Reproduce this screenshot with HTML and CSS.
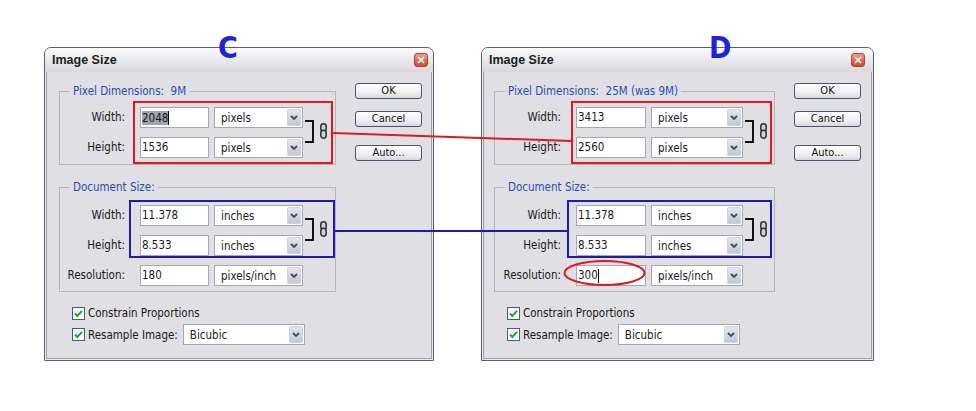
FILE: index.html
```html
<!DOCTYPE html>
<html>
<head>
    <link rel="stylesheet" href="styles.css">
</head>
<body>
    <div class="page">
        <!-- Dialog C: before resampling -->
        <div class="dialog">
            <div class="titlebar">
                <span class="title">Image Size</span>
                <span class="close"><svg width="8" height="8" viewBox="0 0 8 8"><path d="M1 1L7 7M7 1L1 7" stroke="#fff" stroke-width="1.7"/></svg></span>
            </div>
            <div class="body">
                <div class="main">
                    <fieldset class="group">
                        <legend>Pixel Dimensions:&nbsp; 9M</legend>
                        <div class="grid">
                            <label class="lbl">Width:</label>
                            <div class="input"><span class="hilite">2048</span><span class="caret"></span></div>
                            <div class="select"><span class="val">pixels</span><span class="arrow"><svg width="8" height="5" viewBox="0 0 8 5"><path d="M1 1L4 4L7 1" fill="none" stroke="#454a5a" stroke-width="1.8"/></svg></span></div>
                            <div class="chain"><span class="bracket"></span><svg class="link" width="7" height="16" viewBox="0 0 7 16"><rect x="0.8" y="0.8" width="5.4" height="8" rx="2.7" fill="#cfcfd4" stroke="#333" stroke-width="1.5"/><rect x="0.8" y="7.2" width="5.4" height="8" rx="2.7" fill="#cfcfd4" stroke="#333" stroke-width="1.5"/></svg></div>
                            <label class="lbl">Height:</label>
                            <div class="input">1536</div>
                            <div class="select"><span class="val">pixels</span><span class="arrow"><svg width="8" height="5" viewBox="0 0 8 5"><path d="M1 1L4 4L7 1" fill="none" stroke="#454a5a" stroke-width="1.8"/></svg></span></div>
                        </div>
                    </fieldset>
                    <fieldset class="group group-doc">
                        <legend>Document Size:</legend>
                        <div class="grid">
                            <label class="lbl">Width:</label>
                            <div class="input">11.378</div>
                            <div class="select"><span class="val">inches</span><span class="arrow"><svg width="8" height="5" viewBox="0 0 8 5"><path d="M1 1L4 4L7 1" fill="none" stroke="#454a5a" stroke-width="1.8"/></svg></span></div>
                            <div class="chain"><span class="bracket"></span><svg class="link" width="7" height="16" viewBox="0 0 7 16"><rect x="0.8" y="0.8" width="5.4" height="8" rx="2.7" fill="#cfcfd4" stroke="#333" stroke-width="1.5"/><rect x="0.8" y="7.2" width="5.4" height="8" rx="2.7" fill="#cfcfd4" stroke="#333" stroke-width="1.5"/></svg></div>
                            <label class="lbl">Height:</label>
                            <div class="input">8.533</div>
                            <div class="select"><span class="val">inches</span><span class="arrow"><svg width="8" height="5" viewBox="0 0 8 5"><path d="M1 1L4 4L7 1" fill="none" stroke="#454a5a" stroke-width="1.8"/></svg></span></div>
                            <label class="lbl">Resolution:</label>
                            <div class="input">180</div>
                            <div class="select"><span class="val">pixels/inch</span><span class="arrow"><svg width="8" height="5" viewBox="0 0 8 5"><path d="M1 1L4 4L7 1" fill="none" stroke="#454a5a" stroke-width="1.8"/></svg></span></div>
                        </div>
                    </fieldset>
                    <div class="options">
                        <div class="opt">
                            <span class="check"><svg width="11" height="11" viewBox="0 0 11 11"><path d="M2 5.5L4.3 8L9 2.8" fill="none" stroke="#22a32a" stroke-width="2"/></svg></span>
                            <span>Constrain Proportions</span>
                        </div>
                        <div class="opt opt-tall">
                            <span class="check"><svg width="11" height="11" viewBox="0 0 11 11"><path d="M2 5.5L4.3 8L9 2.8" fill="none" stroke="#22a32a" stroke-width="2"/></svg></span>
                            <span>Resample Image:</span>
                            <div class="select select-method"><span class="val">Bicubic</span><span class="arrow"><svg width="8" height="5" viewBox="0 0 8 5"><path d="M1 1L4 4L7 1" fill="none" stroke="#454a5a" stroke-width="1.8"/></svg></span></div>
                        </div>
                    </div>
                </div>
                <div class="side">
                    <button class="btn">OK</button>
                    <button class="btn">Cancel</button>
                    <button class="btn btn-auto">Auto...</button>
                </div>
            </div>
        </div>

        <!-- Dialog D: after resampling -->
        <div class="dialog dlg-d">
            <div class="titlebar">
                <span class="title">Image Size</span>
                <span class="close"><svg width="8" height="8" viewBox="0 0 8 8"><path d="M1 1L7 7M7 1L1 7" stroke="#fff" stroke-width="1.7"/></svg></span>
            </div>
            <div class="body">
                <div class="main">
                    <fieldset class="group">
                        <legend>Pixel Dimensions:&nbsp; 25M (was 9M)</legend>
                        <div class="grid">
                            <label class="lbl">Width:</label>
                            <div class="input">3413</div>
                            <div class="select"><span class="val">pixels</span><span class="arrow"><svg width="8" height="5" viewBox="0 0 8 5"><path d="M1 1L4 4L7 1" fill="none" stroke="#454a5a" stroke-width="1.8"/></svg></span></div>
                            <div class="chain"><span class="bracket"></span><svg class="link" width="7" height="16" viewBox="0 0 7 16"><rect x="0.8" y="0.8" width="5.4" height="8" rx="2.7" fill="#cfcfd4" stroke="#333" stroke-width="1.5"/><rect x="0.8" y="7.2" width="5.4" height="8" rx="2.7" fill="#cfcfd4" stroke="#333" stroke-width="1.5"/></svg></div>
                            <label class="lbl">Height:</label>
                            <div class="input">2560</div>
                            <div class="select"><span class="val">pixels</span><span class="arrow"><svg width="8" height="5" viewBox="0 0 8 5"><path d="M1 1L4 4L7 1" fill="none" stroke="#454a5a" stroke-width="1.8"/></svg></span></div>
                        </div>
                    </fieldset>
                    <fieldset class="group group-doc">
                        <legend>Document Size:</legend>
                        <div class="grid">
                            <label class="lbl">Width:</label>
                            <div class="input">11.378</div>
                            <div class="select"><span class="val">inches</span><span class="arrow"><svg width="8" height="5" viewBox="0 0 8 5"><path d="M1 1L4 4L7 1" fill="none" stroke="#454a5a" stroke-width="1.8"/></svg></span></div>
                            <div class="chain"><span class="bracket"></span><svg class="link" width="7" height="16" viewBox="0 0 7 16"><rect x="0.8" y="0.8" width="5.4" height="8" rx="2.7" fill="#cfcfd4" stroke="#333" stroke-width="1.5"/><rect x="0.8" y="7.2" width="5.4" height="8" rx="2.7" fill="#cfcfd4" stroke="#333" stroke-width="1.5"/></svg></div>
                            <label class="lbl">Height:</label>
                            <div class="input">8.533</div>
                            <div class="select"><span class="val">inches</span><span class="arrow"><svg width="8" height="5" viewBox="0 0 8 5"><path d="M1 1L4 4L7 1" fill="none" stroke="#454a5a" stroke-width="1.8"/></svg></span></div>
                            <label class="lbl">Resolution:</label>
                            <div class="input"><span>300</span><span class="caret"></span></div>
                            <div class="select"><span class="val">pixels/inch</span><span class="arrow"><svg width="8" height="5" viewBox="0 0 8 5"><path d="M1 1L4 4L7 1" fill="none" stroke="#454a5a" stroke-width="1.8"/></svg></span></div>
                        </div>
                    </fieldset>
                    <div class="options">
                        <div class="opt">
                            <span class="check"><svg width="11" height="11" viewBox="0 0 11 11"><path d="M2 5.5L4.3 8L9 2.8" fill="none" stroke="#22a32a" stroke-width="2"/></svg></span>
                            <span>Constrain Proportions</span>
                        </div>
                        <div class="opt opt-tall">
                            <span class="check"><svg width="11" height="11" viewBox="0 0 11 11"><path d="M2 5.5L4.3 8L9 2.8" fill="none" stroke="#22a32a" stroke-width="2"/></svg></span>
                            <span>Resample Image:</span>
                            <div class="select select-method"><span class="val">Bicubic</span><span class="arrow"><svg width="8" height="5" viewBox="0 0 8 5"><path d="M1 1L4 4L7 1" fill="none" stroke="#454a5a" stroke-width="1.8"/></svg></span></div>
                        </div>
                    </div>
                </div>
                <div class="side">
                    <button class="btn">OK</button>
                    <button class="btn">Cancel</button>
                    <button class="btn btn-auto">Auto...</button>
                </div>
            </div>
        </div>

        <!-- Hand-drawn annotations on top -->
        <svg class="marks" width="976" height="411" viewBox="0 0 976 411">
            <rect x="134" y="102" width="198" height="61" fill="none" stroke="#e01820" stroke-width="2"/>
            <rect x="572" y="102" width="199" height="61" fill="none" stroke="#e01820" stroke-width="2"/>
            <line x1="333" y1="133" x2="572" y2="141" stroke="#e01820" stroke-width="2"/>
            <rect x="130" y="201" width="204" height="56" fill="none" stroke="#1c1cb4" stroke-width="2"/>
            <rect x="568" y="201" width="203" height="56" fill="none" stroke="#1c1cb4" stroke-width="2"/>
            <line x1="335" y1="231" x2="568" y2="231" stroke="#1c1cb4" stroke-width="2"/>
            <ellipse cx="604.5" cy="273" rx="40" ry="12" fill="none" stroke="#e01820" stroke-width="2"/>
        </svg>
        <span class="letter letter-c">C</span>
        <span class="letter letter-d">D</span>
    </div>
</body>
</html>
```

FILE: styles.css
```css
body {
    margin: 0;
    background: #fff;
    font-family: "DejaVu Sans Condensed", "Liberation Sans", sans-serif;
    font-size: 11.5px;
    color: #1a1a1a;
}

.page {
    position: relative;
    width: 976px;
    height: 411px;
    box-sizing: border-box;
    padding: 47px 0 0 44px;
    display: flex;
    align-items: flex-start;
    gap: 47px;
}

.dialog {
    width: 390px;
    box-sizing: border-box;
    border: 1px solid #5a5e70;
    border-radius: 7px 7px 0 0;
    background: #ebebee;
}

.dlg-d {
    width: 393px;
}

.titlebar {
    height: 24px;
    display: flex;
    align-items: center;
    justify-content: space-between;
    padding: 0 5px 0 7px;
    border-radius: 6px 6px 0 0;
    background: linear-gradient(#fbfbfc, #e8e8ec 55%, #d8d8de);
}

.dlg-d .titlebar {
    padding-right: 8px;
}

.title {
    font-family: "Liberation Sans", sans-serif;
    font-weight: bold;
    font-size: 12.5px;
    line-height: 24px;
    color: #1e1e1e;
}

.close {
    width: 14px;
    height: 14px;
    box-sizing: border-box;
    border: 1px solid #b5452e;
    border-radius: 3px;
    background: linear-gradient(#f29a84, #d4492f);
    display: flex;
    align-items: center;
    justify-content: center;
}

.body {
    display: flex;
    margin: 0 1px 1px;
    border: 1px solid #9d9fa9;
    border-top: 0;
    background: #e0dfe3;
    padding: 12px 9px 13px 12px;
}

.dlg-d .body {
    padding-left: 10px;
    padding-right: 10px;
}

.main {
    width: 277px;
}

.dlg-d .main {
    width: 281px;
}

.group {
    margin: 0;
    padding: 9px 0 6px;
    min-width: 0;
    border: 1px solid #b4b5bd;
}

.group legend {
    padding: 0 3px;
    margin-left: 10px;
    line-height: 14px;
    color: #1f4fb4;
}

.group-doc {
    margin-top: 15px;
    padding: 11px 0 5px;
}

.grid {
    display: grid;
    grid-template-columns: 75px 69px 89px auto;
    column-gap: 5px;
    row-gap: 9px;
}

.dlg-d .grid {
    grid-template-columns: 76px 70px 92px auto;
}

.lbl {
    height: 21px;
    line-height: 21px;
    text-align: right;
    padding-right: 10px;
}

.input {
    height: 21px;
    box-sizing: border-box;
    border: 1px solid #a3a8b4;
    background: #fff;
    padding-left: 1px;
    line-height: 19px;
    display: flex;
    align-items: center;
}

.hilite {
    background: #9ea2b2;
    line-height: 14px;
}

.caret {
    width: 1px;
    height: 14px;
    background: #111;
}

.select {
    height: 21px;
    box-sizing: border-box;
    border: 1px solid #a3a8b4;
    background: #fff;
    display: flex;
}

.val {
    flex: 1;
    padding-left: 6px;
    line-height: 20px;
}

.arrow {
    width: 14px;
    margin: 1px;
    border-radius: 2px;
    background: linear-gradient(#e6e9f3, #c0c5d6);
    box-shadow: inset 0 0 0 1px #d0d4e2;
    display: flex;
    align-items: center;
    justify-content: center;
}

.chain {
    grid-column: 4;
    grid-row: 1 / span 2;
    display: flex;
    align-items: center;
    margin-left: -3px;
}

.bracket {
    width: 9px;
    height: 23px;
    box-sizing: border-box;
    border: 2px solid #111;
    border-left: 0;
    margin-top: -3px;
}

.link {
    margin-left: 6px;
    margin-top: -3px;
}

.options {
    margin-top: 13px;
    padding-left: 13px;
    display: flex;
    flex-direction: column;
    gap: 3px;
}

.opt {
    height: 16px;
    display: flex;
    align-items: center;
}

.opt-tall {
    height: 21px;
}

.check {
    width: 13px;
    height: 13px;
    box-sizing: border-box;
    margin-right: 3px;
    border: 1px solid #4a5a7c;
    background: linear-gradient(#f4f4f6, #fff);
    display: flex;
    align-items: center;
    justify-content: center;
}

.select-method {
    width: 122px;
    margin-left: 5px;
}

.side {
    margin-left: 19px;
    margin-top: -1px;
    display: flex;
    flex-direction: column;
}

.btn {
    width: 67px;
    height: 16px;
    box-sizing: border-box;
    padding: 0;
    border: 1px solid #4a5370;
    border-radius: 3px;
    background: linear-gradient(#ffffff, #ededf1 65%, #d6d6dd);
    font-family: inherit;
    font-size: 11px;
    line-height: 14px;
    color: #111;
}

.btn + .btn {
    margin-top: 12px;
}

.btn-auto {
    margin-top: 18px !important;
}

.marks {
    position: absolute;
    top: 0;
    left: 0;
    pointer-events: none;
}

.letter {
    position: absolute;
    top: 33px;
    font-family: "DejaVu Sans Condensed", sans-serif;
    font-weight: bold;
    font-size: 30px;
    line-height: 30px;
    color: #1a22e8;
}

.letter-c {
    left: 218px;
}

.letter-d {
    left: 709px;
}
```
